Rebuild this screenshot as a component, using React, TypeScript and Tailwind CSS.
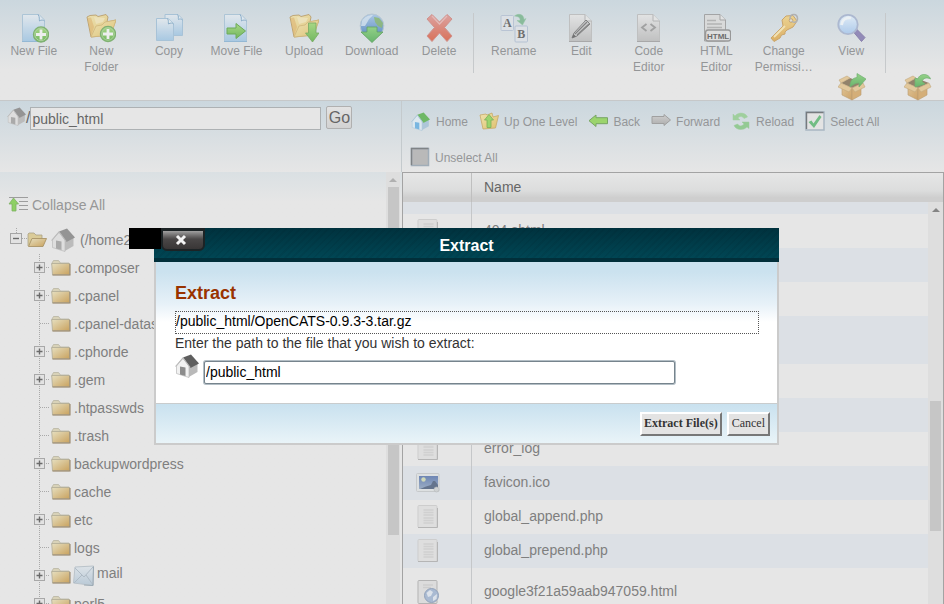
import React from "react";

type IconProps = { className?: string };

/* ---------- shared gradients ---------- */

function Gradients() {
  const stops = (id: string, a: string, b: string, diagonal = false) => (
    <linearGradient id={id} x1="0" y1="0" x2={diagonal ? "1" : "0"} y2="1">
      <stop offset="0" stopColor={a} />
      <stop offset="1" stopColor={b} />
    </linearGradient>
  );
  return (
    <svg className="absolute size-0" aria-hidden="true">
      <defs>
        {stops("sheetBlue", "#e3e9ee", "#a3c6e2")}
        {stops("sheetGray", "#e4e4e4", "#bdbdbd")}
        {stops("folderGold", "#efe3ae", "#dfc06e", true)}
        {stops("folderTan", "#e6dfc0", "#c9a25e", true)}
        {stops("green", "#a3d77c", "#67b352")}
        {stops("leaf", "#8ccf7e", "#5bb060")}
        {stops("red", "#dd9d9a", "#d9664c")}
        {stops("gold", "#efd389", "#dcaa58")}
        {stops("lens", "#e2eef8", "#a9c8ec")}
        {stops("globe", "#a9c6e6", "#4c82bb")}
        {stops("grayArrow", "#cfcfcf", "#adadad")}
        {stops("box", "#e0c391", "#cb9c5c", true)}
        {stops("photo", "#6e86b4", "#9badc4")}
        {stops("mail", "#dde3e8", "#b9c9d6")}
      </defs>
    </svg>
  );
}

/* ---------- toolbar icons (30 x 30) ---------- */

function Svg30({ children }: { children: React.ReactNode }) {
  return (
    <svg viewBox="0 0 30 30" className="size-[30px] opacity-90" aria-hidden="true">
      {children}
    </svg>
  );
}

const GreenPlus = ({ x, y }: { x: number; y: number }) => (
  <g transform={`translate(${x} ${y})`}>
    <circle r="7.6" fill="url(#green)" stroke="#76ac66" strokeWidth="1.2" />
    <circle r="6.2" fill="none" stroke="#a9cf9a" strokeWidth="1" />
    <path d="M-5 0H5M0-5V5" stroke="#f0f0f0" strokeWidth="2.8" />
  </g>
);

const BlueSheet = () => (
  <>
    <path d="M3.500 1.500H20L25.500 7V28.500H3.500Z" fill="url(#sheetBlue)" stroke="#a9c3d6" />
    <path d="M3 28.500H26" stroke="#8db4d3" />
    <path d="M19 1.500C21 4 20 6.500 20.500 8C22 6.500 24.500 7 25.500 8" fill="#dfe9f0" stroke="#84aac7" />
  </>
);

const NewFileIcon = () => (
  <Svg30>
    <BlueSheet />
    <GreenPlus x={22} y={21.5} />
  </Svg30>
);

const OpenFolder = () => (
  <>
    <path d="M1 4L4 2.500L10 2L12 3.500L20 1.500L22 4L21 9L30 7L24 22L5 24Z" fill="url(#folderGold)" stroke="#b89a63" strokeWidth=".9" />
    <path d="M5 24L10 13L16 12L19 9L30 7L25 22Z" fill="url(#folderGold)" stroke="#cfb272" strokeWidth=".8" />
    <path d="M1.500 5L5 23L8 14L5 4.500Z" fill="#dca85b" opacity=".5" />
    <path d="M8 4L10 11L17 9L19 5Z" fill="#f1e7c2" opacity=".7" />
  </>
);

const NewFolderIcon = () => (
  <Svg30>
    <OpenFolder />
    <GreenPlus x={22} y={21} />
  </Svg30>
);

const CopyIcon = () => (
  <Svg30>
    <path d="M11 1.500H24L28.500 6V22.500H11Z" fill="url(#sheetBlue)" stroke="#a3c0d6" />
    <path d="M23.500 1.500C25 3.500 24 5 24.500 6.500C26 5.500 27.500 6 28.500 7" fill="#e2ebf1" stroke="#84aac7" />
    <path d="M2.500 5.500H14L19.500 10.500V27.500H2.500Z" fill="url(#sheetBlue)" stroke="#a3c0d6" />
    <path d="M13.500 5.500C15 8 14 9.500 14.500 11C16.500 9.500 18.500 10 19.500 11" fill="#e2ebf1" stroke="#84aac7" />
  </Svg30>
);

const MoveFileIcon = () => (
  <Svg30>
    <BlueSheet />
    <path d="M6 15H15V10.500L24.500 18L15 25.500V21H6Z" fill="url(#green)" stroke="#62a54c" />
  </Svg30>
);

const UploadIcon = () => (
  <Svg30>
    <OpenFolder />
    <path d="M19.500 10H27V20H30L23.500 29L16.500 20H19.500Z" fill="url(#green)" stroke="#6da455" strokeWidth=".8" />
  </Svg30>
);

const DownloadIcon = () => (
  <Svg30>
    <circle cx="15" cy="12.800" r="11.800" fill="url(#globe)" stroke="#b6c6d1" />
    <path d="M5 8C7 4 12 2 16 2C14 5 12 5 11 8L8 13L4 13Z" fill="#dbe7f0" opacity=".75" />
    <path d="M17 4L22 5L26 10L25 15L21 13L18 9Z" fill="#86b568" opacity=".85" />
    <path d="M10 14H20V19H26L15 29.500L4 19H10Z" fill="url(#leaf)" stroke="#559c56" strokeWidth=".8" />
  </Svg30>
);

const DeleteIcon = () => (
  <Svg30>
    <path d="M3 6L8 1.500L15.500 9L23 1.500L28 6L20.500 14.500L28 23L23 28.500L15.500 20L8 28.500L3 23L10.500 14.500Z" fill="url(#red)" stroke="#cf8a84" strokeLinejoin="round" />
    <path d="M8 3L15.500 11L23 3" fill="none" stroke="#e6b7b4" strokeWidth="1.200" />
  </Svg30>
);

const RenameIcon = () => (
  <Svg30>
    <rect x="2" y="2.500" width="12.500" height="15" rx="1" fill="#dde1e6" stroke="#b6c2d3" />
    <rect x="16" y="13" width="12.500" height="16" rx="1" fill="#dde1e6" stroke="#b1bfd2" />
    <text x="8.300" y="14" textAnchor="middle" fontSize="12" fontWeight="bold" fill="#636363" className="font-['Liberation_Serif',serif]">A</text>
    <text x="22.300" y="25" textAnchor="middle" fontSize="12" fontWeight="bold" fill="#636363" className="font-['Liberation_Serif',serif]">B</text>
    <path d="M15.500 3C19 0 25 1 25 6.500L27 5.500L23.500 12L18 7.500L21 7.500C21.500 4 19 3.500 15.500 3Z" fill="#82b894" stroke="#8fc3a0" strokeWidth=".5" />
  </Svg30>
);

const GraySheet = () => (
  <>
    <path d="M3.500 1.500H19L25.500 8V28.500H3.500Z" fill="url(#sheetGray)" stroke="#bdbdbd" />
    <path d="M19 1.500V8H25.500" fill="#e4e4e4" stroke="#b0b0b0" />
    <path d="M3 28.500H26" stroke="#a3a3a3" />
  </>
);

const EditIcon = () => (
  <Svg30>
    <GraySheet />
    <path d="M6 25L8 20L20 7L24 11L11 23Z" fill="#c9c9c9" stroke="#7a7a7a" />
    <path d="M9 21L21 9M11 22L23 11" stroke="#7a7a7a" strokeWidth="1.100" />
    <path d="M6 25L7.500 21L10 23.500Z" fill="#666" />
  </Svg30>
);

const CodeIcon = () => (
  <Svg30>
    <GraySheet />
    <path d="M12.500 11L8 14.500L12.500 18M16.500 11L21 14.500L16.500 18" fill="none" stroke="#9b9b9b" strokeWidth="1.800" />
  </Svg30>
);

const HtmlIcon = () => (
  <Svg30>
    <path d="M3.500 1.500H19L24.500 7V28H3.500Z" fill="#dadada" stroke="#9f9f9f" />
    <path d="M19 1.500V7H24.500" fill="#e4e4e4" stroke="#9f9f9f" />
    <path d="M6 7.500H15M6 11H21M6 14.500H21" stroke="#b0b0b0" strokeWidth="1.500" />
    <rect x="4.600" y="17" width="25" height="11" rx="2.500" fill="#dedede" stroke="#919191" strokeWidth="1.300" />
    <text x="17.100" y="25.500" textAnchor="middle" fontSize="8" fontWeight="bold" fill="#5e5e5e" className="font-['Liberation_Sans',sans-serif]">HTML</text>
  </Svg30>
);

const KeyIcon = () => (
  <Svg30>
    <path d="M2 25L14 13L13 7L17 3L24 2.500L28 8L24 14L18 17L16 19V21L12.500 22L11 25L5 28.500Z" fill="url(#gold)" stroke="#c9a060" />
    <path d="M5 24L16 13" stroke="#f3e3b2" strokeWidth="1.800" />
    <circle cx="22" cy="7.500" r="1.800" fill="#e0dcd2" stroke="#b48d52" strokeWidth=".7" />
    <path d="M21 6C21 0 29 0 28.500 6C28 10 24 10 23 8" fill="none" stroke="#adadad" strokeWidth="1.500" />
  </Svg30>
);

const ViewIcon = () => (
  <Svg30>
    <path d="M17.500 19L20.500 16L29 24.500L25.500 28.500Z" fill="#8b82b4" stroke="#8178a8" />
    <circle cx="12" cy="11.500" r="9.700" fill="url(#lens)" stroke="#a8b5cf" strokeWidth="1.800" />
    <path d="M5.500 12C6 7 10 4 15 5" fill="none" stroke="#eef3f7" strokeWidth="2.800" />
  </Svg30>
);

/* ---------- package icons (28 x 28) ---------- */

const PackageBox = () => (
  <>
    <path d="M3 11L14 15V27L4 22V14Z" fill="url(#box)" stroke="#b69666" strokeWidth=".6" />
    <path d="M25 11L14 15V27L23 22V14Z" fill="#d3a96d" stroke="#b69666" strokeWidth=".6" />
    <path d="M3 10L12 5L25 10L14 15Z" fill="#8a785e" />
    <path d="M3 10L0 14L11 19L14 15ZM25 10L27 14L17 19L14 15ZM3 10L1 7L9 3L12 5Z" fill="#e2c594" stroke="#bfa374" strokeWidth=".6" />
  </>
);

const ExtractIcon = () => (
  <svg viewBox="0 0 28 28" className="size-7 opacity-90" aria-hidden="true">
    <PackageBox />
    <path d="M12 14C12 7 15 5 19 4.500V.5L28 6L21 14V10C17 10 15 12 12 14Z" fill="url(#leaf)" stroke="#66aa66" strokeWidth=".7" />
  </svg>
);

const CompressIcon = () => (
  <svg viewBox="0 0 28 28" className="size-7 opacity-90" aria-hidden="true">
    <PackageBox />
    <path d="M26.500 6C25 0 15 0 14 6L11 5V14L21 11L18 8.500C19 5 23 4 26.500 6Z" fill="url(#leaf)" stroke="#66aa66" strokeWidth=".7" />
  </svg>
);

/* ---------- houses ---------- */

function HouseIcon({
  className,
  roof,
  roofSide,
  wall,
  door,
}: IconProps & { roof: string; roofSide: string; wall: string; door: string }) {
  return (
    <svg viewBox="0 0 24 24" className={className} aria-hidden="true">
      <path d="M13 12L22.500 8V18L13 23.500Z" fill={roofSide} />
      <path d="M1.500 12L8 4L14 12V23.500L1.500 19.500Z" fill={wall} stroke={roofSide} strokeWidth=".7" />
      <path d="M8 3.500L16 .5L24 9.500L15.500 14Z" fill={roof} />
      <path d="M.5 12.500L8 3.800L15.200 13.500" fill="none" stroke={roofSide} strokeWidth="1.100" />
      <path d="M5 12.500L10.500 13.500V22L5 20.500Z" fill={door} />
    </svg>
  );
}

const DimHouse = ({ className }: IconProps) => (
  <HouseIcon className={className} roof="#949494" roofSide="#bbbbbb" wall="#dedede" door="#aaaaaa" />
);
const DialogHouse = ({ className }: IconProps) => (
  <HouseIcon className={className} roof="#5e5e5e" roofSide="#b9b9b9" wall="#f1f1f1" door="#8c8c8c" />
);

/* ---------- navigation icons (18 x 20) ---------- */

function Svg18({ children }: { children: React.ReactNode }) {
  return (
    <svg viewBox="0 0 18 20" className="h-5 w-[18px] shrink-0 overflow-visible" aria-hidden="true">
      {children}
    </svg>
  );
}

const NavHome = () => (
  <HouseIcon className="size-[19px] shrink-0" roof="#6fb865" roofSide="#adc6d8" wall="#dde8ef" door="#79b6e0" />
);

const NavUp = () => (
  <Svg18>
    <path d="M0 4L6 3L7 4L12 2L13 6L18.500 4.500L15.500 17L3 18Z" fill="url(#folderGold)" stroke="#c7aa68" strokeWidth=".8" />
    <path d="M9 3.500L13.500 9H11V16.500H7V9H4.500Z" fill="#9bd46d" stroke="#78b05c" strokeWidth=".8" />
  </Svg18>
);

const NavBack = () => (
  <Svg18>
    <path d="M0 9.700L7 4V6.700H18.500V12.700H7V15.500Z" fill="#9bd46d" stroke="#78a564" strokeWidth="1" />
  </Svg18>
);

const NavForward = () => (
  <Svg18>
    <path d="M18.500 9L12 3.500V5.500H0V12.500H12V14.500Z" fill="url(#grayArrow)" stroke="#a0a0a0" strokeWidth="1" />
  </Svg18>
);

const NavReload = () => (
  <Svg18>
    <path d="M1 9V3L3 5C7 0 14 2 15.500 6L12 7.500C10 5 8 5 6 7L8 9Z" fill="#9fcf9d" stroke="#a3cfa3" strokeWidth=".5" />
    <path d="M17 11V17.500L15 16C11 20 4 19 2 14.500L5.500 13C8 16 10 15 12 13L10 11Z" fill="#93ca93" stroke="#9ccb9c" strokeWidth=".5" />
  </Svg18>
);

const NavSelect = () => (
  <Svg18>
    <rect x="0" y="1" width="18" height="18" fill="#e3e3e3" stroke="#a9b6c2" strokeWidth="1.500" />
    <path d="M.500 18V1.500H17.500" fill="none" stroke="#767a7e" strokeWidth="1.400" />
    <path d="M2.500 11L5.500 9.500L7.500 12.500L13.500 4L15.500 6L8 17Z" fill="#72bd84" />
  </Svg18>
);

const NavUnselect = () => (
  <Svg18>
    <rect x="0.500" y="1.500" width="17" height="17" fill="#b9b9b9" stroke="#a0adb8" strokeWidth="1.500" />
    <path d="M.500 18V1.500H17.500" fill="none" stroke="#7f8386" strokeWidth="1.400" />
  </Svg18>
);

/* ---------- tree drawing ---------- */

const ClosedFolder = () => (
  <svg viewBox="0 0 20 18" className="h-[18px] w-5 shrink-0" aria-hidden="true">
    <path d="M1 4L2.500 1.500H7.500L9.500 4H18V6H1Z" fill="#d8d2b8" stroke="#b3af9c" strokeWidth=".7" />
    <path d="M.700 4.500H18.500V15.800H1.500Z" fill="url(#folderTan)" stroke="#b0ab96" strokeWidth=".8" />
    <path d="M1.500 16H19V5" fill="none" stroke="#97866a" strokeWidth="1.100" />
  </svg>
);

const TreeOpenFolder = () => (
  <svg viewBox="0 0 20 18" className="h-[18px] w-5 shrink-0" aria-hidden="true">
    <path d="M1 15V3L2 2H7L9 4H15V8" fill="#dacb98" stroke="#a9a187" strokeWidth=".8" />
    <path d="M1.500 15.500L5 7.500H19.500L16 15.500Z" fill="url(#folderTan)" stroke="#a99468" strokeWidth=".9" />
  </svg>
);

const MailIcon = () => (
  <svg viewBox="0 0 22 22" className="size-[22px] shrink-0" aria-hidden="true">
    <path d="M2 2L20.500 1L20 20.500L.5 18Z" fill="url(#mail)" stroke="#bac3ca" />
    <path d="M2 3L11 12L20 2M1 18L9 10M20 20L13 10" fill="none" stroke="#afbbc5" />
    <path d="M20.500 1.500L20 20.500L11 20" fill="none" stroke="#9dabb5" />
  </svg>
);

function Branch({ expandable }: { expandable: boolean }) {
  return (
    <svg viewBox="0 0 17 28" className="h-7 w-[17px]" aria-hidden="true">
      <path d="M5.500 0V28" stroke="#a9a9a9" strokeDasharray="1 1" />
      <path d="M6 13.500H16" stroke="#a9a9a9" strokeDasharray="1 1" />
      {expandable && (
        <>
          <rect x=".500" y="8.500" width="10" height="10" fill="#e2e2e2" stroke="#a8a8a8" />
          <path d="M2.500 13.500H8.500M5.500 10.500V16.500" stroke="#6a6a6a" strokeWidth="1.400" />
        </>
      )}
    </svg>
  );
}

/* ---------- file list icons ---------- */

const PlainFile = () => (
  <svg viewBox="0 0 22 24" className="h-6 w-[22px]" aria-hidden="true">
    <rect x="1" y=".5" width="19" height="22" rx="1" fill="#dedede" stroke="#cdcdcd" />
    <path d="M1 22.500H20.500V3" fill="none" stroke="#b5b5b5" />
    <path d="M6.500 5H16.500M6.500 7.500H16.500M6.500 10H16.500M6.500 13H16.500M6.500 15.500H16.500M6.500 18H16.500" stroke="#d0d0d0" strokeWidth="1.300" />
  </svg>
);

const WebFile = () => (
  <svg viewBox="0 0 22 24" className="h-6 w-[22px]" aria-hidden="true">
    <rect x="1" y=".5" width="19" height="23" rx="1" fill="#dcdcdc" stroke="#b3b3b3" />
    <path d="M6 5H16M6 7.500H14" stroke="#cdcdcd" strokeWidth="1.300" />
    <circle cx="14.500" cy="15.500" r="7" fill="#a9bad2" stroke="#92a2ba" />
    <path d="M9.500 13L13 10L16 12L14 16L11 17ZM16 17L20 14L19.500 19L16 21Z" fill="#dce2ea" />
  </svg>
);

const ImageFile = () => (
  <svg viewBox="0 0 24 22" className="h-[22px] w-6" aria-hidden="true">
    <rect x=".5" y="1.500" width="22.500" height="18" rx="1" fill="#dde0e1" stroke="#c6c9cb" />
    <rect x="3" y="4" width="19" height="13" fill="url(#photo)" />
    <circle cx="7.500" cy="7.500" r="2.200" fill="#cfd8b8" />
    <path d="M4 17L10 14.500L15 13L17 9L19 9L22 13V17Z" fill="#64748d" />
    <circle cx="20.500" cy="17.500" r="2.500" fill="#cfd2d3" stroke="#b5b8ba" strokeWidth=".6" />
  </svg>
);

/* ---------- data ---------- */

const fileTools = [
  { label: "New File", Icon: NewFileIcon },
  { label: "New Folder", Icon: NewFolderIcon },
  { label: "Copy", Icon: CopyIcon },
  { label: "Move File", Icon: MoveFileIcon },
  { label: "Upload", Icon: UploadIcon },
  { label: "Download", Icon: DownloadIcon },
  { label: "Delete", Icon: DeleteIcon },
];

const editTools = [
  { label: "Rename", Icon: RenameIcon },
  { label: "Edit", Icon: EditIcon },
  { label: "Code Editor", Icon: CodeIcon },
  { label: "HTML Editor", Icon: HtmlIcon },
  { label: "Change Permissi…", Icon: KeyIcon },
  { label: "View", Icon: ViewIcon },
];

const navItems = [
  { label: "Home", Icon: NavHome },
  { label: "Up One Level", Icon: NavUp },
  { label: "Back", Icon: NavBack },
  { label: "Forward", Icon: NavForward },
  { label: "Reload", Icon: NavReload },
  { label: "Select All", Icon: NavSelect },
  { label: "Unselect All", Icon: NavUnselect },
];

const folders = [
  { name: ".composer", expandable: true },
  { name: ".cpanel", expandable: true },
  { name: ".cpanel-datastore", expandable: false },
  { name: ".cphorde", expandable: true },
  { name: ".gem", expandable: true },
  { name: ".htpasswds", expandable: false },
  { name: ".trash", expandable: false },
  { name: "backupwordpress", expandable: true },
  { name: "cache", expandable: false },
  { name: "etc", expandable: true },
  { name: "logs", expandable: false },
  { name: "mail", expandable: true },
  { name: "perl5", expandable: true },
];

const files = [
  { name: "", Icon: WebFile, tall: true },
  { name: "404.shtml", Icon: PlainFile, tall: false },
  { name: "", Icon: PlainFile, tall: false },
  { name: "", Icon: PlainFile, tall: false },
  { name: "", Icon: WebFile, tall: true },
  { name: "", Icon: PlainFile, tall: false },
  { name: "", Icon: PlainFile, tall: false },
  { name: "error_log", Icon: PlainFile, tall: false },
  { name: "favicon.ico", Icon: ImageFile, tall: false },
  { name: "global_append.php", Icon: PlainFile, tall: false },
  { name: "global_prepend.php", Icon: PlainFile, tall: false },
  { name: "google3f21a59aab947059.html", Icon: WebFile, tall: true },
];

/* ---------- page parts ---------- */

function ToolButton({ label, Icon }: { label: string; Icon: () => React.ReactElement }) {
  return (
    <button type="button" className="flex flex-col items-center text-xs leading-4 text-[#949698]">
      <Icon />
      <span className="w-[60px] text-center">{label}</span>
    </button>
  );
}

function Toolbar() {
  return (
    <header className="flex shrink-0 flex-col border-b border-[#c6c8c9] bg-linear-to-b from-[#cbd7de] to-[#e6e6e6] to-70% pt-[13px]">
      <div className="flex h-[60px]">
        <div className="grid w-[474px] grid-cols-7 items-start border-r border-[#c6c9cb]">
          {fileTools.map((t) => (
            <ToolButton key={t.label} {...t} />
          ))}
        </div>
        <div className="grid w-[412px] grid-cols-6 items-start border-r border-[#c6c9cb] pl-1.5">
          {editTools.map((t) => (
            <ToolButton key={t.label} {...t} />
          ))}
        </div>
      </div>
      <div className="flex h-[27px] justify-end gap-[38px] pr-3">
        <button type="button" aria-label="Extract" className="size-7">
          <ExtractIcon />
        </button>
        <button type="button" aria-label="Compress" className="size-7">
          <CompressIcon />
        </button>
      </div>
    </header>
  );
}

function LocationBar() {
  return (
    <form
      className="flex h-[71px] shrink-0 items-start border-r border-[#c4cacd] bg-linear-to-b from-[#cbd7de] to-[#e6e6e6] pt-[5px] pl-[7px]"
      onSubmit={(e) => e.preventDefault()}
    >
      <label htmlFor="location" className="flex h-6 items-center text-base leading-6 text-[#666]">
        <DimHouse className="mb-1 size-[19px]" />/
      </label>
      <input
        id="location"
        defaultValue="public_html"
        className="mt-px h-[23px] w-[291px] border border-[#adb1b3] bg-[#e6e6e6] px-px text-sm text-[#666]"
      />
      <button
        type="submit"
        className="ml-[5px] h-[23px] w-[26px] rounded-xs border border-[#b0b0b0] bg-linear-to-b from-[#e3e3e3] to-[#d2d2d2] text-base leading-5 text-[#666]"
      >
        Go
      </button>
    </form>
  );
}

function FolderTree() {
  return (
    <nav className="flex min-h-0 flex-1 bg-linear-to-b from-[#dae0e3] to-[#e6e6e6] to-[30px] text-sm text-[#7f7f7f]">
      <div className="min-w-0 flex-1 overflow-hidden pt-[19px]">
        <button type="button" className="flex h-7 items-center gap-1 pl-2 text-[#979797]">
          <svg viewBox="0 0 20 18" className="h-[18px] w-5" aria-hidden="true">
            <path d="M1 1.500H20M11 5.500H20M11 9.500H20M11 13.500H20" stroke="#9d9d9d" />
            <path d="M5.500 2L10.500 8H8V15H4V8H1Z" fill="#8ed064" stroke="#7db162" strokeWidth=".8" />
          </svg>
          Collapse All
        </button>
        <div className="mt-[7px] flex h-7 items-center pl-2.5">
          <button type="button" aria-label="Collapse home" className="shrink-0">
            <svg viewBox="0 0 17 28" className="h-7 w-[17px]" aria-hidden="true">
              <path d="M6.500 2V7" stroke="#a9a9a9" strokeDasharray="1 1" />
              <path d="M12 12.500H17" stroke="#a9a9a9" strokeDasharray="1 1" />
              <rect x=".500" y="7.500" width="11" height="10" fill="#e2e2e2" stroke="#a4a4a4" />
              <path d="M3 12.500H9" stroke="#6a6a6a" strokeWidth="1.400" />
            </svg>
          </button>
          <TreeOpenFolder />
          <DimHouse className="ml-1 size-6 shrink-0" />
          <a href="#home" className="ml-[5px]">(/home2</a>
        </div>
        <ul>
          {folders.map((f) => (
            <li key={f.name} className="flex h-7 items-center pl-[34px]">
              {f.expandable ? (
                <button type="button" aria-label={`Expand ${f.name}`} className="shrink-0">
                  <Branch expandable />
                </button>
              ) : (
                <Branch expandable={false} />
              )}
              <ClosedFolder />
              {f.name === "mail" && (
                <span className="ml-0.5">
                  <MailIcon />
                </span>
              )}
              <a href={`#${f.name}`} className={f.name === "mail" ? "ml-0.5 pb-1.5" : "ml-[3px]"}>
                {f.name}
              </a>
            </li>
          ))}
        </ul>
      </div>
      <div className="mr-0.5 flex w-3.5 flex-col items-center bg-[#dedede]">
        <span className="mt-1.5 border-x-4 border-b-4 border-x-transparent border-b-[#b0b0b0]" />
        <span className="mt-[5px] h-[348px] w-[11px] shrink-0 bg-[#c6c6c6]" />
      </div>
    </nav>
  );
}

function NavBar() {
  return (
    <div className="flex min-h-[71px] shrink-0 flex-wrap content-start gap-3 bg-linear-to-b from-[#cbd7de] to-[#e6e6e6] pt-2 pl-[9px]">
      {navItems.map(({ label, Icon }) => (
        <button key={label} type="button" className="flex h-6 items-center gap-1.5 text-xs text-[#949698]">
          <Icon />
          <span className="pt-0.5">{label}</span>
        </button>
      ))}
    </div>
  );
}

function FileList() {
  return (
    <section className="flex min-h-0 flex-1 flex-col border-t border-r border-l border-[#a3a3a3] text-sm text-[#7f7f7f]">
      <div className="z-10 flex h-[29px] shrink-0 bg-linear-to-b from-[#e6e6e6] via-[#dcdddd] via-60% to-[#cecece] to-85%">
        <span className="w-[69px] border-r border-[#bfbfbf]" />
        <span className="pl-3 leading-7 text-[#666]">Name</span>
      </div>
      <div className="flex min-h-0 flex-1">
        <div className="min-w-0 flex-1 overflow-hidden">
          <table className="-mt-9 w-full table-fixed border-separate border-spacing-0">
            <colgroup>
              <col className="w-[69px]" />
              <col />
            </colgroup>
            <tbody>
              {files.map(({ name, Icon, tall }, i) => (
                <tr key={i} className={`${tall ? "h-12" : "h-[34px]"} ${i % 2 === 0 ? "bg-[#dce0e5]" : "bg-[#e6e6e6]"}`}>
                  <td className="border-r border-[#c5c7c9] p-0">
                    <span className="flex w-[50px] justify-center">
                      <Icon />
                    </span>
                  </td>
                  <td className="p-0 pb-0.5 pl-3 leading-5">{name}</td>
                </tr>
              ))}
            </tbody>
          </table>
        </div>
        <div className="flex w-[15px] flex-col items-center bg-[#dedede]">
          <span className="mt-1.5 border-x-4 border-b-4 border-x-transparent border-b-[#848484]" />
          <span className="mt-[189px] h-[130px] w-[11px] shrink-0 bg-[#c6c6c6]" />
        </div>
      </div>
    </section>
  );
}

function ExtractDialog() {
  return (
    <div className="fixed inset-0 z-20 flex items-start justify-center pt-[228px] pr-[11px]">
      <div role="dialog" aria-labelledby="dialog-title" className="relative w-[625px] text-sm">
        <div className="h-[34px] border-b-4 border-[#012f3a] bg-[repeating-linear-gradient(135deg,transparent_0_3px,rgba(0,20,30,0.08)_3px_5px),linear-gradient(#00323e,#004654)]">
          <h1 id="dialog-title" className="text-center text-base leading-9 font-bold text-white">
            Extract
          </h1>
        </div>
        <span className="absolute top-0 -left-[25px] h-[21px] w-8 bg-black" />
        <button
          type="button"
          aria-label="Close"
          className="absolute top-0 left-[7px] flex h-[23px] w-11 items-center justify-center rounded-b-md border-2 border-t-3 border-[#1c2325] bg-linear-to-b from-[#a0a0a0] from-0% via-[#4a4747] via-45% to-[#393636]"
        >
          <svg viewBox="0 0 12 12" className="mr-1 size-3" aria-hidden="true">
            <path d="M2 2L10 10M10 2L2 10" stroke="#f4f4f4" strokeWidth="3" />
          </svg>
        </button>
        <form className="border-x-2 border-b-2 border-[#cbcbcb] bg-white" onSubmit={(e) => e.preventDefault()}>
          <div className="bg-linear-to-b from-[#cbe2ef] from-[10px] via-[#e7f1f8] via-[42px] to-white to-[60px] pt-[19px] pr-[18px] pb-[18px] pl-[19px]">
            <h2 className="text-lg leading-6 font-bold text-[#993300]">
              <label htmlFor="archive">Extract</label>
            </h2>
            <input
              id="archive"
              defaultValue="/public_html/OpenCATS-0.9.3-3.tar.gz"
              className="mt-1.5 block h-[23px] w-full border border-dotted border-[#555] pb-1 text-black"
            />
            <label htmlFor="target" className="block leading-[18px] text-[#333]">
              Enter the path to the file that you wish to extract:
            </label>
            <div className="flex items-start gap-[5px] pt-0.5">
              <DialogHouse className="size-6" />
              <input
                id="target"
                defaultValue="/public_html"
                className="mt-[7px] mb-px h-[23px] w-[471px] rounded-xs border border-[#76848d] bg-white pr-px pb-0.5 pl-px text-black ring-1 ring-[#b3bec5]"
              />
            </div>
          </div>
          <div className="flex justify-end gap-[5px] border-t border-[#c9cccd] bg-linear-to-b from-[#c9e1ef] to-[#e9f4f8] pt-2 pr-[7px] pb-[7px] font-['Liberation_Serif',serif] text-xs leading-[18px] text-[#333]">
            <button
              type="submit"
              className="h-6 border-2 border-t-white border-r-[#777] border-b-[#777] border-l-white bg-[#e3e3e3] px-0.5 pb-0.5 font-bold"
            >
              Extract File(s)
            </button>
            <button
              type="button"
              className="h-6 border-2 border-t-white border-r-[#777] border-b-[#777] border-l-white bg-[#e3e3e3] px-[3px] pb-0.5"
            >
              Cancel
            </button>
          </div>
        </form>
      </div>
    </div>
  );
}

export default function App() {
  return (
    <div className="flex h-screen flex-col overflow-hidden bg-[#e6e6e6] font-['Liberation_Sans',Arial,sans-serif]">
      <Gradients />
      <Toolbar />
      <main className="flex min-h-0 flex-1">
        <div className="flex w-[402px] shrink-0 flex-col">
          <LocationBar />
          <FolderTree />
        </div>
        <div className="flex min-w-0 flex-1 flex-col">
          <NavBar />
          <FileList />
        </div>
      </main>
      <ExtractDialog />
    </div>
  );
}
